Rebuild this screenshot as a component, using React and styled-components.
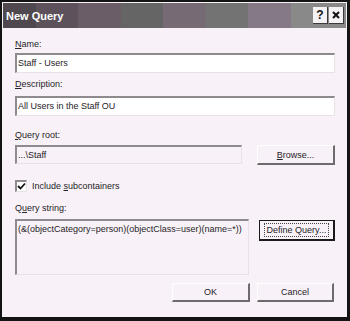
import React from 'react';
import styled, { createGlobalStyle, css } from 'styled-components';

const GlobalStyle = createGlobalStyle`
  html, body {
    margin: 0;
    padding: 0;
    background: #ffffff;
  }
  * {
    box-sizing: border-box;
  }
`;

const Window = styled.div`
  width: 350px;
  height: 321px;
  display: flex;
  flex-direction: column;
  background: #f8f2f8;
  border: 2px solid #141414;
  border-bottom-width: 4px;
  border-right-width: 3px;
  font-family: 'Liberation Sans', Arial, sans-serif;
  font-size: 9px;
  color: #262226;
`;

const TitleBar = styled.div`
  height: 25px;
  margin: 1px 1px 0 1px;
  display: flex;
  align-items: center;
  padding: 0 2px 0 3px;
  background: linear-gradient(
    90deg,
    #4f484e 0px,
    #4f484e 33px,
    #5d525b 33px,
    #5d525b 75px,
    #6a5d68 75px,
    #6a5d68 118px,
    #666566 118px,
    #666566 160px,
    #766a75 160px,
    #766a75 203px,
    #737373 203px,
    #737373 245px,
    #857985 245px,
    #857985 288px,
    #898989 288px
  );
`;

const Title = styled.div`
  flex: 1;
  color: #ffffff;
  font-weight: bold;
  font-size: 11px;
`;

const CaptionButton = styled.div`
  width: 15px;
  height: 17px;
  margin-left: 1px;
  background: #f4f0f4;
  border-right: 1px solid #3a3a3a;
  border-bottom: 1px solid #3a3a3a;
  display: flex;
  align-items: center;
  justify-content: center;
  font-weight: bold;
  font-size: 12px;
  color: #111;
`;

const Body = styled.div`
  flex: 1;
  padding: 11px 12px 0 13px;
  display: flex;
  flex-direction: column;
`;

const Label = styled.div`
  line-height: 11px;
  height: 11px;
  margin-bottom: ${(p) => p.gap || 4}px;
  u {
    text-decoration: underline;
  }
`;

const sunken = css`
  border-top: 2px solid #8e8a8e;
  border-left: 2px solid #8e8a8e;
  border-right: 1px solid #e6e2e6;
  border-bottom: 1px solid #e6e2e6;
`;

const Field = styled.div`
  ${sunken}
  height: ${(p) => p.h || 20}px;
  width: ${(p) => (p.w ? `${p.w}px` : '100%')};
  background: ${(p) => (p.disabled ? '#f8f2f8' : '#ffffff')};
  padding: 3px 1px;
  line-height: 11px;
  margin-bottom: ${(p) => p.mb || 0}px;
  white-space: nowrap;
  overflow: hidden;
`;

const Row = styled.div`
  display: flex;
  align-items: flex-start;
  justify-content: space-between;
  margin-bottom: ${(p) => p.mb || 0}px;
`;

const Button = styled.div`
  width: ${(p) => p.w || 77}px;
  height: ${(p) => p.h || 20}px;
  background: #f8f2f8;
  border-top: 1px solid #ffffff;
  border-left: 1px solid #ffffff;
  border-right: 2px solid #6e6a6e;
  border-bottom: 2px solid #6e6a6e;
  display: flex;
  align-items: center;
  justify-content: center;
  margin-top: ${(p) => p.mt || 0}px;
  ${(p) =>
    p.isDefault &&
    css`
      border: 1px solid #1a1a1a;
      border-right-width: 2px;
      border-bottom-width: 2px;
      span {
        border: 1px dotted #444;
        padding: 1px 2px;
      }
    `}
`;

const CheckRow = styled.div`
  display: flex;
  align-items: center;
  gap: 5px;
  margin-bottom: 11px;
`;

const CheckBox = styled.div`
  width: 12px;
  height: 12px;
  ${sunken}
  background: #ffffff;
  display: flex;
  align-items: center;
  justify-content: center;
`;

const Footer = styled.div`
  display: flex;
  justify-content: flex-end;
  gap: 7px;
  margin-top: 8px;
  padding-right: 1px;
`;

export default function App() {
  return (
    <>
      <GlobalStyle />
      <Window>
        <TitleBar>
          <Title>New Query</Title>
          <CaptionButton>?</CaptionButton>
          <CaptionButton>
            <svg width="8" height="8" viewBox="0 0 8 8">
              <path d="M1 1 L7 7 M7 1 L1 7" stroke="#111" strokeWidth="2" />
            </svg>
          </CaptionButton>
        </TitleBar>
        <Body>
          <Label gap={3}>
            <u>N</u>ame:
          </Label>
          <Field mb={6}>Staff - Users</Field>
          <Label gap={6}>
            <u>D</u>escription:
          </Label>
          <Field mb={14}>All Users in the Staff OU</Field>
          <Label gap={4}>
            <u>Q</u>uery root:
          </Label>
          <Row mb={15}>
            <Field w={227} h={19} disabled>
              ...\Staff
            </Field>
            <Button w={78} h={20}>
              <span>
                <u>B</u>rowse...
              </span>
            </Button>
          </Row>
          <CheckRow>
            <CheckBox>
              <svg width="9" height="9" viewBox="0 0 9 9">
                <path d="M1 4 L3.5 6.5 L8 1.5" stroke="#111" strokeWidth="1.8" fill="none" />
              </svg>
            </CheckBox>
            <span>
              Include <u>s</u>ubcontainers
            </span>
          </CheckRow>
          <Label gap={5}>
            Q<u>u</u>ery string:
          </Label>
          <Row>
            <Field w={234} h={56} disabled>
              (&amp;(objectCategory=person)(objectClass=user)(name=*))
            </Field>
            <Button w={76} h={21} mt={1} isDefault>
              <span>Define Query...</span>
            </Button>
          </Row>
          <Footer>
            <Button w={78} h={19}>
              <span>OK</span>
            </Button>
            <Button w={77} h={19}>
              <span>Cancel</span>
            </Button>
          </Footer>
        </Body>
      </Window>
    </>
  );
}
